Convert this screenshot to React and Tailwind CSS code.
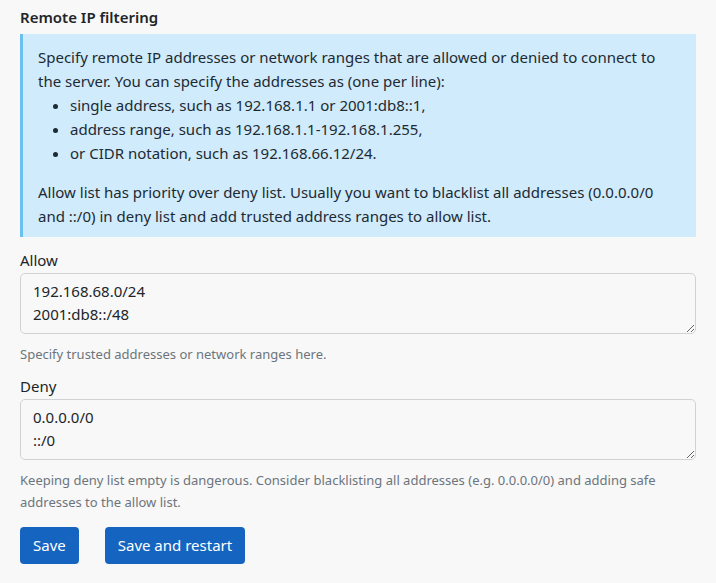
import React from 'react'

const font = { fontFamily: '"Noto Sans", "Open Sans", sans-serif' }

function Field({ label, value, help, className }) {
    return (
        <div className={className}>
            <label className="block text-[15px] leading-[22px] mb-[2px] text-[#212529]">{label}</label>
            <textarea
                rows={2}
                defaultValue={value}
                className="block w-full h-[61px] bg-[#f8f8f8] border border-[#d0d3d6] rounded-[5px] px-3 py-[6px] text-[15px] leading-[23px] text-[#212529] resize-y outline-none"
            />
            <p className="mt-[9px] text-[13px] leading-[22px] text-[#6c757d]">{help}</p>
        </div>
    )
}

export default function App() {
    return (
        <div className="min-h-[583px] bg-[#f8f8f8] px-5 pt-[6px] text-[#212529]" style={font}>
            {/* Heading */}
            <h2 className="text-[15px] leading-[22px] font-semibold mb-[6px]">Remote IP filtering</h2>

            {/* Info box */}
            <div className="bg-[#d0ebfb] border-l-[3px] border-[#6cc0ee] pl-[15px] pr-[30px] pt-[11px] pb-[9px] text-[15px] leading-6 text-[#1d2a33]">
                <p>
                    Specify remote IP addresses or network ranges that are allowed or denied to connect to
                    the server. You can specify the addresses as (one per line):
                </p>
                <ul className="list-disc pl-8 mb-[15px]">
                    <li>single address, such as 192.168.1.1 or 2001:db8::1,</li>
                    <li>address range, such as 192.168.1.1-192.168.1.255,</li>
                    <li>or CIDR notation, such as 192.168.66.12/24.</li>
                </ul>
                <p>
                    Allow list has priority over deny list. Usually you want to blacklist all addresses (0.0.0.0/0
                    and ::/0) in deny list and add trusted address ranges to allow list.
                </p>
            </div>

            <Field
                className="mt-3"
                label="Allow"
                value={"192.168.68.0/24\n2001:db8::/48"}
                help="Specify trusted addresses or network ranges here."
            />
            <Field
                className="mt-[10px]"
                label="Deny"
                value={"0.0.0.0/0\n::/0"}
                help="Keeping deny list empty is dangerous. Consider blacklisting all addresses (e.g. 0.0.0.0/0) and adding safe addresses to the allow list."
            />

            {/* Buttons */}
            <div className="flex gap-[26px] mt-[14px]">
                <button className="h-[37px] px-[13px] rounded-[4px] bg-[#1565c0] text-white text-[15px]">Save</button>
                <button className="h-[37px] px-[13px] rounded-[4px] bg-[#1565c0] text-white text-[15px]">Save and restart</button>
            </div>
        </div>
    )
}
